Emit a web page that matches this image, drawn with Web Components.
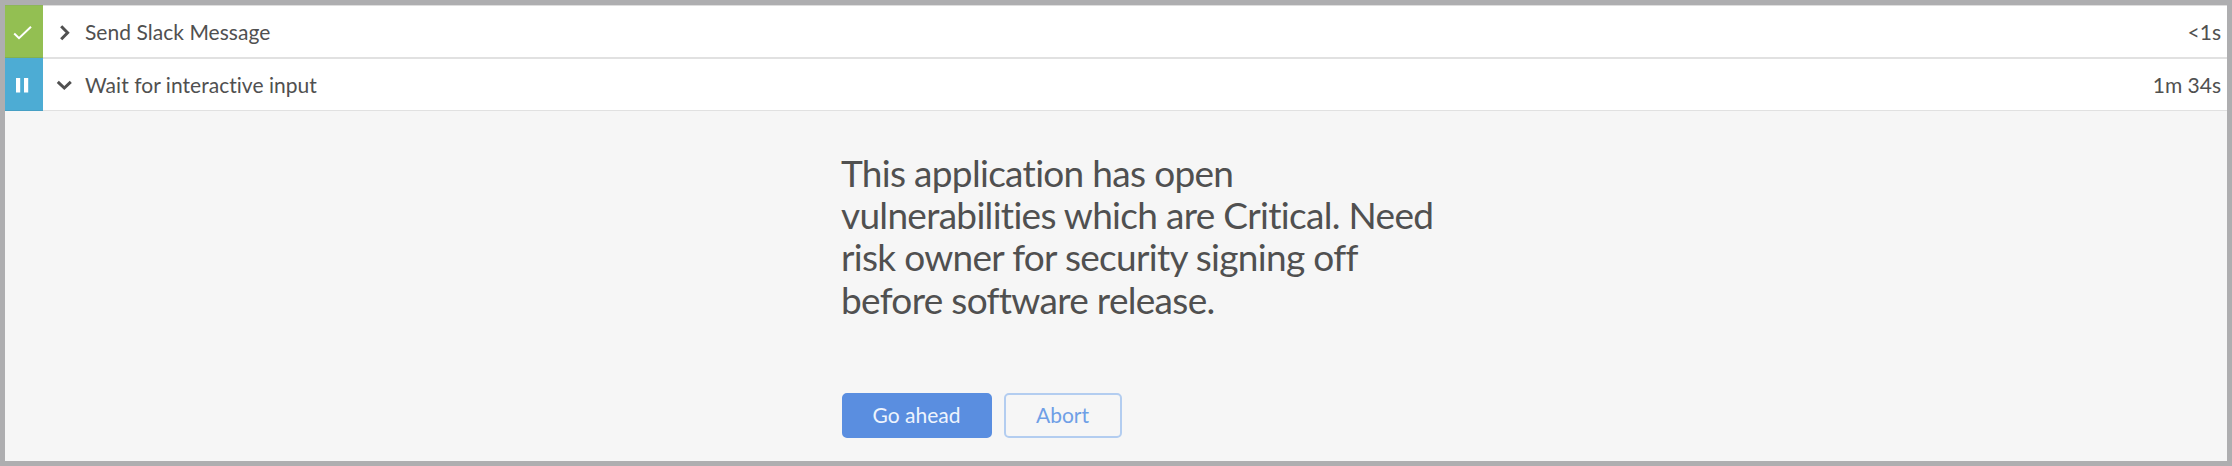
<!DOCTYPE html>
<html lang="en"><head><meta charset="utf-8"><title>Pipeline steps</title>
<style>html,body{margin:0;height:100%}body{font-family:Lato,"Liberation Sans",sans-serif;color:#505050;font-variant-ligatures:none}</style></head>
<body>
<step-log>
  <step-row status="success" duration="&lt;1s">Send Slack Message</step-row>
  <step-row status="paused" duration="1m 34s" open>Wait for interactive input</step-row>
  <input-prompt>
    This application has open vulnerabilities which are Critical. Need risk owner for security signing off before software release.
    <action-button slot="actions" primary>Go ahead</action-button>
    <action-button slot="actions">Abort</action-button>
  </input-prompt>
</step-log>
<script>
class StepLog extends HTMLElement {
  connectedCallback() {
    this.attachShadow({mode:'open'}).innerHTML = `<style>
      :host{display:flex;flex-direction:column;box-sizing:border-box;height:466px;border:5px solid #aeaeb0;background:#f6f6f6}
    </style><slot></slot>`;
  }
}
const STATUS = {
  success: '<path d="M9.2 28.5 14 33.2 26 21.8" fill="none" stroke="#fff" stroke-width="2"/>',
  paused: '<path d="M11 20h4.2v14.5H11zM19 20h4.2v14.5H19z" fill="#fff"/>'
};
class StepRow extends HTMLElement {
  connectedCallback() {
    const status = this.getAttribute('status');
    const chevron = this.hasAttribute('open') ? 'M14.8 23.9 21.3 30 27.8 23.9' : 'M18.2 21.2 24.6 27.7 18.2 34.2';
    this.attachShadow({mode:'open'}).innerHTML = `<style>
      :host{display:flex;height:53px;font-size:21px;line-height:26px;background:#fff}
      .badge{width:38px;height:53px;flex:none;box-sizing:border-box}
      .success{background:#93bf52;box-shadow:inset 0 -1px #83b052,inset 0 1px #8db659}
      .paused{background:#4dacd4;box-shadow:inset 0 -1px #469fc4}
      .body{flex:1;display:flex;box-sizing:border-box;padding:0 6px 0 0;border-bottom:1px solid #e1e1e1}
      :host([status=success]) .body{border-top:1px solid #dedede}
      :host([status=paused]) .body{border-top:1px solid #e1e1e1}
      svg{display:block;flex:none}
      .chev{width:42px;height:53px;margin-top:-1px}
      .name{flex:1;padding-top:13px;letter-spacing:.04px}
      .time{padding-top:13px}
    </style>
    <div class="badge ${status}"><svg width="38" height="53" viewBox="0 0 38 53">${STATUS[status]}</svg></div>
    <div class="body"><svg class="chev" viewBox="0 0 42 53"><path d="${chevron}" fill="none" stroke="#505050" stroke-width="3"/></svg>
    <div class="name"><slot></slot></div><div class="time"></div></div>`;
    this.shadowRoot.querySelector('.time').textContent = this.getAttribute('duration');
  }
}
class InputPrompt extends HTMLElement {
  connectedCallback() {
    this.attachShadow({mode:'open'}).innerHTML = `<style>
      :host{display:block;width:600px;margin-left:836px;padding-top:41px}
      .message{font-size:37px;line-height:42.2px;letter-spacing:-.69px}
      .actions{display:flex;gap:12px;margin-top:72px;padding-left:1px}
    </style><div class="message"><slot></slot></div><div class="actions"><slot name="actions"></slot></div>`;
  }
}
class ActionButton extends HTMLElement {
  connectedCallback() {
    this.attachShadow({mode:'open'}).innerHTML = `<style>
      :host{display:block}
      button{display:block;width:118px;height:45px;box-sizing:border-box;margin:0;padding:0 1px 0 0;border:2px solid #b3cdf0;border-radius:5px;background:transparent;color:#6f9fe6;font:21px/26px Lato,sans-serif;font-variant-ligatures:none}
      :host([primary]) button{width:150px;border-color:#5a8ee0;background:#5a8ee0;color:#eef4fd}
    </style><button type="button"><slot></slot></button>`;
  }
}
customElements.define('step-log', StepLog);
customElements.define('step-row', StepRow);
customElements.define('input-prompt', InputPrompt);
customElements.define('action-button', ActionButton);
</script>
</body></html>
